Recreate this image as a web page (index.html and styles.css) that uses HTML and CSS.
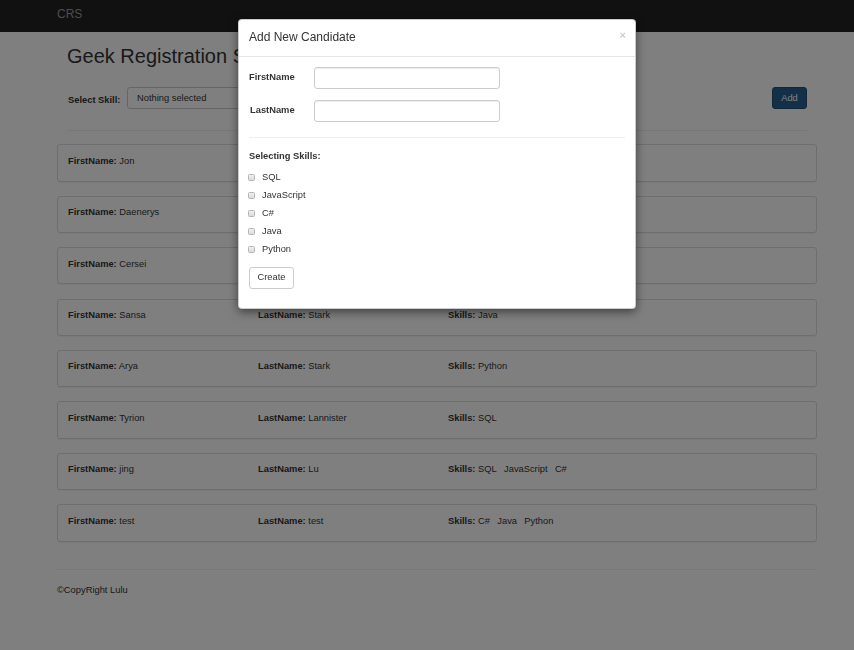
FILE: index.html
```html
<!DOCTYPE html>
<html>
<head>
<meta charset="utf-8">
<title>CRS</title>
<link rel="stylesheet" href="styles.css">
</head>
<body>
<nav class="navbar"><span class="brand">CRS</span></nav>
<main class="container">
  <div class="page-head">
    <h1 class="title">Geek Registration System</h1>
    <div class="filter-row">
      <label class="filter-label">Select Skill:</label>
      <div class="select-btn"><span>Nothing selected</span><span class="caret"></span></div>
      <button class="btn btn-primary">Add</button>
    </div>
    <hr class="rule">
  </div>
  <div class="cards">
    <div class="card"><div><b>FirstName:</b> Jon</div><div><b>LastName:</b> Snow</div><div><b>Skills:</b> <span class="skill">SQL</span></div></div>
    <div class="card"><div><b>FirstName:</b> Daenerys</div><div><b>LastName:</b> Targaryen</div><div><b>Skills:</b> <span class="skill">JavaScript</span></div></div>
    <div class="card"><div><b>FirstName:</b> Cersei</div><div><b>LastName:</b> Lannister</div><div><b>Skills:</b> <span class="skill">C#</span></div></div>
    <div class="card"><div><b>FirstName:</b> Sansa</div><div><b>LastName:</b> Stark</div><div><b>Skills:</b> <span class="skill">Java</span></div></div>
    <div class="card"><div><b>FirstName:</b> Arya</div><div><b>LastName:</b> Stark</div><div><b>Skills:</b> <span class="skill">Python</span></div></div>
    <div class="card"><div><b>FirstName:</b> Tyrion</div><div><b>LastName:</b> Lannister</div><div><b>Skills:</b> <span class="skill">SQL</span></div></div>
    <div class="card"><div><b>FirstName:</b> jing</div><div><b>LastName:</b> Lu</div><div><b>Skills:</b> <span class="skill">SQL</span> <span class="skill">JavaScript</span> <span class="skill">C#</span></div></div>
    <div class="card"><div><b>FirstName:</b> test</div><div><b>LastName:</b> test</div><div><b>Skills:</b> <span class="skill">C#</span> <span class="skill">Java</span> <span class="skill">Python</span></div></div>
  </div>
  <footer class="footer">
    <hr class="rule footer-rule">
    <p class="copy">©CopyRight Lulu</p>
  </footer>
</main>

<div class="backdrop"></div>
<div class="modal">
  <div class="modal-header">
    <h4 class="modal-title">Add New Candidate</h4>
    <span class="close">×</span>
  </div>
  <div class="modal-body">
    <div class="form-row"><label class="form-label">FirstName</label><input class="input" type="text"></div>
    <div class="form-row"><label class="form-label lastname">LastName</label><input class="input" type="text"></div>
    <hr class="modal-rule">
    <div class="skills-title">Selecting Skills:</div>
    <div class="check-row"><span class="check"></span>SQL</div>
    <div class="check-row"><span class="check"></span>JavaScript</div>
    <div class="check-row"><span class="check"></span>C#</div>
    <div class="check-row"><span class="check"></span>Java</div>
    <div class="check-row"><span class="check"></span>Python</div>
    <button class="btn btn-default">Create</button>
  </div>
</div>
</body>
</html>
```
FILE: styles.css
```css
* { box-sizing: border-box; }
body {
  margin: 0;
  font-family: "Liberation Sans", Arial, sans-serif;
  font-size: 9.33px;
  line-height: 13.33px;
  color: #333;
  background: #fff;
  overflow: hidden;
}
.navbar {
  height: 32px;
  background: #222;
  padding: 7px 0 0 57px;
}
.brand {
  display: block;
  font-size: 12px;
  line-height: 14px;
  color: #9d9d9d;
}
.container {
  width: 760px;
  margin-left: 57px;
}
.page-head { padding: 0 10px; }
.title {
  margin: 13px 0 0;
  font-size: 20px;
  line-height: 22px;
  font-weight: normal;
  color: #333;
  white-space: nowrap;
}
.filter-row {
  margin-top: 20.3px;
  display: flex;
  align-items: center;
  height: 22px;
}
.filter-label {
  font-weight: bold;
  margin: 5px 0 0 1px;
  width: 59px;
}
.select-btn {
  width: 150px;
  height: 22px;
  border: 1px solid #ccc;
  border-radius: 3px;
  background: #fff;
  padding: 4px 9px 0;
  display: flex;
  justify-content: space-between;
}
.caret {
  margin-top: 5px;
  border-top: 3px solid #333;
  border-left: 3px solid transparent;
  border-right: 3px solid transparent;
  height: 0;
}
.btn {
  font-family: inherit;
  font-size: 9.33px;
  line-height: 13.33px;
  height: 22px;
  padding: 3.5px 8.5px;
  border: 1px solid transparent;
  border-radius: 3px;
}
.btn-primary {
  margin-left: auto;
  width: 35px;
  padding: 3.5px 0;
  background: #286090;
  border-color: #204d74;
  color: #fff;
}
.btn-default {
  background: #fff;
  border-color: #ccc;
  color: #333;
  width: 45px;
  padding: 3.5px 0;
  margin-top: 7.6px;
}
.rule {
  margin: 21px 0 0;
  border: 0;
  border-top: 1px solid #eee;
}
.cards { margin-top: 13px; }
.card {
  display: grid;
  grid-template-columns: 190px 190px 1fr;
  padding: 9.5px 10px 12.5px;
  height: 37.33px;
  margin-bottom: 14.1px;
  border: 1px solid #ddd;
  border-radius: 3px;
  box-shadow: 0 1px 1px rgba(0,0,0,.05);
}
.skill { margin-right: 4.7px; }
.footer-rule { margin-top: 27px; }
.copy { margin: 14.5px 0 0; }

.backdrop {
  position: fixed;
  inset: 0;
  background: rgba(0,0,0,.5);
}
.modal {
  position: absolute;
  left: 238px;
  top: 19px;
  width: 398px;
  background: #fff;
  border: 1px solid rgba(0,0,0,.2);
  border-radius: 4px;
  box-shadow: 0 3px 10px rgba(0,0,0,.5);
}
.modal-header {
  display: flex;
  align-items: flex-start;
  padding: 9px 10px 11px;
  border-bottom: 1px solid #e5e5e5;
}
.modal-title {
  margin: 0;
  font-size: 12px;
  line-height: 16px;
  font-weight: normal;
}
.close {
  margin: -2px -1px 0 auto;
  font-size: 11px;
  line-height: 16px;
  font-weight: bold;
  color: #000;
  opacity: .2;
}
.modal-body { padding: 10px 10px 19px; }
.form-row {
  display: flex;
  align-items: center;
  margin-bottom: 11px;
}
.form-label {
  font-weight: bold;
  width: 65px;
}
.lastname { padding-left: 1px; }
.input {
  width: 186px;
  height: 22px;
  border: 1px solid #ccc;
  border-radius: 3px;
  box-shadow: inset 0 1px 1px rgba(0,0,0,.075);
  margin: 0;
}
.modal-rule {
  margin: 14.6px 0 0;
  border: 0;
  border-top: 1px solid #eee;
}
.skills-title {
  font-weight: bold;
  margin-top: 12.4px;
}
.check-row {
  display: flex;
  align-items: center;
  height: 18px;
}
.skills-title + .check-row { margin-top: 5.6px; }
.check {
  width: 7px;
  height: 7px;
  margin: 0 6.7px 0 -0.7px;
  border: 1px solid #b5b5b5;
  border-radius: 1.5px;
  background: linear-gradient(#f0f0f0, #dcdcdc);
}
```
